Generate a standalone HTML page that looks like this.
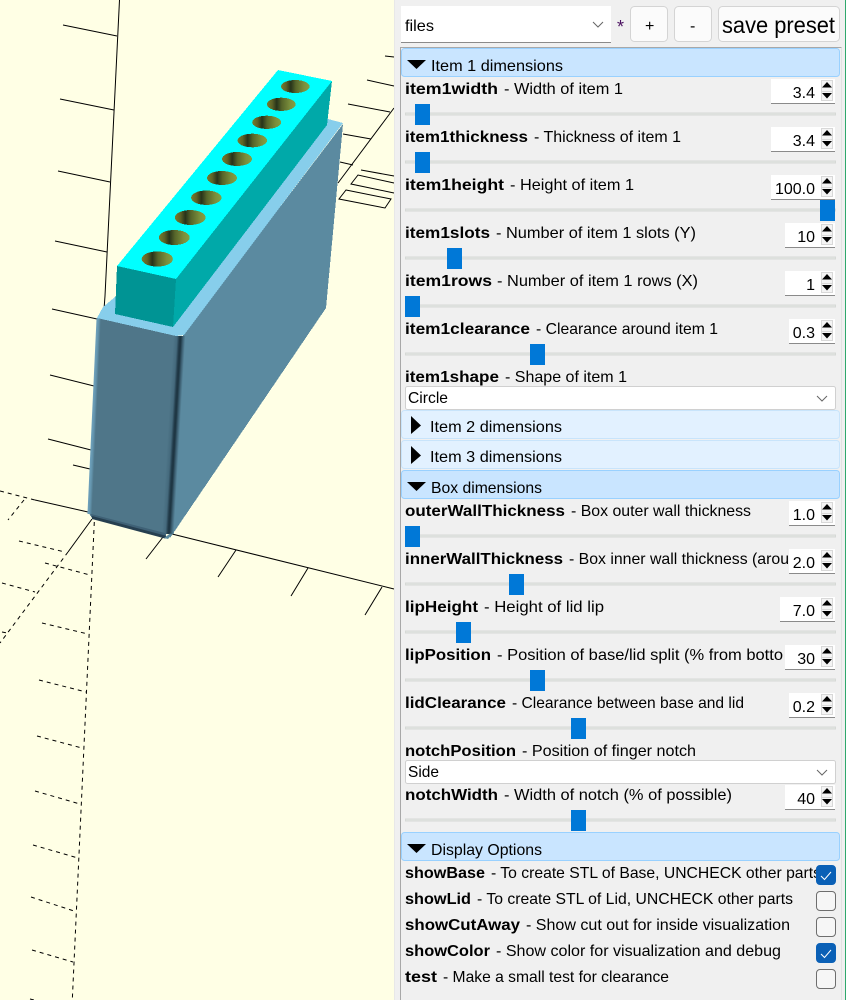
<!DOCTYPE html>
<html><head><meta charset="utf-8"><title>Customizer</title>
<style>
html,body{margin:0;padding:0;width:846px;height:1000px;overflow:hidden;background:#f0f0f0}
svg{display:block}
text{font-family:"Liberation Sans",sans-serif;font-size:16px;fill:#000}
.b{font-weight:bold}
.g line,.g polyline,.g polygon{stroke:#000;stroke-width:1;fill:none}
.d line{stroke-dasharray:4 4}
.c{shape-rendering:crispEdges}
.t{fill:#e4e6e4;stroke:#d6d9d6;stroke-width:1}
.h{fill:#0078d7}
.s{fill:#fff}
.hd{fill:#c9e5ff;stroke:#99d1ff;stroke-width:1}
.hl{fill:#e2f1ff;stroke:#c8e4fb;stroke-width:1}
.sel{fill:#fff;stroke:#d0d0d0;stroke-width:1}
.ch{fill:none;stroke:#666;stroke-width:1}
.btn{fill:#fbfbfb;stroke:#d4d4d4;stroke-width:1}
.cb{fill:#f6f6f6;stroke:#6e6e6e;stroke-width:1}
.cc{fill:#0a60b6;stroke:#0a60b6;stroke-width:1}
.ck{fill:none;stroke:#fff;stroke-width:1}
.sb{fill:#f4f4f4;stroke:#d8d8d8;stroke-width:1}
</style></head>
<body>
<svg width="846" height="1000" viewBox="0 0 846 1000" xmlns="http://www.w3.org/2000/svg">
<defs>
<linearGradient id="hole" x1="0" x2="1" y1="0" y2="0">
<stop offset="0" stop-color="#787c2c"/><stop offset=".18" stop-color="#5c6226"/><stop offset=".34" stop-color="#27331a"/><stop offset=".52" stop-color="#56652a"/><stop offset=".8" stop-color="#7a8e3c"/><stop offset="1" stop-color="#84a044"/>
</linearGradient>
<linearGradient id="edge" x1="0" x2="1" y1="0" y2="0">
<stop offset="0" stop-color="#4f7689"/><stop offset=".3" stop-color="#456a7d"/><stop offset=".5" stop-color="#213a48"/><stop offset=".62" stop-color="#1d3441"/><stop offset=".8" stop-color="#3d6073"/><stop offset="1" stop-color="#5b8aa0"/>
</linearGradient>
<linearGradient id="ledge" x1="0" x2="1" y1="0" y2="0">
<stop offset="0" stop-color="#6fa2bd"/><stop offset=".5" stop-color="#6495ae"/><stop offset="1" stop-color="#4f7689"/>
</linearGradient>
</defs>

<!-- viewport -->
<rect x="0" y="0" width="394" height="1000" fill="#ffffe5"/>

<!-- grid -->
<g class="g">
<polyline points="119.5,0 105,296 103.5,316"/>
<line x1="63" y1="25" x2="117" y2="36"/>
<line x1="60" y1="99" x2="114" y2="110"/>
<line x1="58" y1="171" x2="110" y2="182"/>
<line x1="55" y1="241" x2="107" y2="252"/>
<line x1="52" y1="309" x2="97" y2="319"/>
<line x1="50" y1="375" x2="94" y2="386"/>
<line x1="48" y1="439" x2="91" y2="450"/>
<line x1="73" y1="465" x2="90" y2="469"/>
<line x1="35" y1="500" x2="88" y2="512"/>
<line x1="172" y1="534" x2="394" y2="589"/>
<line x1="163" y1="537" x2="146" y2="559"/>
<line x1="236" y1="550" x2="218" y2="577"/>
<line x1="308" y1="568" x2="291" y2="596"/>
<line x1="382" y1="587" x2="365" y2="615"/>
<line x1="92" y1="519" x2="68" y2="552"/>
<line x1="385" y1="56" x2="394" y2="57"/>
<line x1="367" y1="80" x2="394" y2="86"/>
<line x1="348" y1="104" x2="390" y2="112"/>
<line x1="394" y1="108" x2="338" y2="183"/>
<line x1="343" y1="134" x2="371" y2="139"/>
<line x1="340" y1="162" x2="353" y2="165"/>
<line x1="361" y1="170" x2="394" y2="176"/>
<polyline points="394,183 358,175 351,184 394,193"/>
<polygon points="346,190 391,199 385,208 339,199"/>
</g>
<g class="g d">
<line x1="0" y1="491" x2="35" y2="500"/>
<line x1="24" y1="500" x2="8" y2="520"/>
<line x1="94.3" y1="522" x2="72.3" y2="1000"/>
<line x1="68" y1="552" x2="0" y2="643"/>
<line x1="19" y1="541" x2="65" y2="552"/>
<line x1="45" y1="563" x2="90" y2="575"/>
<line x1="2" y1="583" x2="35" y2="592"/>
<line x1="2" y1="632" x2="7" y2="633"/>
<line x1="42" y1="623" x2="88" y2="634"/>
<line x1="39" y1="680" x2="86" y2="692"/>
<line x1="37" y1="736" x2="82" y2="748"/>
<line x1="35" y1="791" x2="80" y2="804"/>
<line x1="33" y1="845" x2="78" y2="858"/>
<line x1="31" y1="897" x2="74" y2="911"/>
<line x1="32" y1="950" x2="73" y2="962"/>
<line x1="30" y1="999" x2="34" y2="1000"/>
</g>

<!-- box -->
<polygon class="c" points="183,335 343,124 326,308 170,538" fill="#5b8aa0"/>
<polygon class="c" points="97,318 176,336 166,538 92,518 88,512" fill="#4f7689"/>
<!-- left lit edge -->
<rect x="111.3" y="318" width="4.5" height="196" fill="url(#ledge)" transform="matrix(1,0,-0.0464,1,0,0)"/>
<!-- dark corner edge -->
<rect x="193.3" y="336" width="12" height="198" fill="url(#edge)" transform="matrix(1,0,-0.059,1,0,0)"/>
<!-- bottom rounded edge -->
<polygon points="91,514 165,533 166,536 92,518" fill="#3f6176"/>
<polygon points="92,516 165,535.5 168,538 165,538.5 92,519" fill="#263f50"/>
<polygon points="164,538 170,533.5 172,534.5 168,539" fill="#5b8aa0"/>
<polygon class="c" points="97,318 103,307 328,119 343,123 184,335 176,336" fill="#87ceeb"/>

<!-- item -->
<polygon class="c" points="117,266 176,279 173,327 115,314" fill="#009494"/>
<polygon class="c" points="176,279 332,81 327,125 173,327" fill="#00a9a9"/>
<polygon class="c" points="278,70 332,81 176,279 117,266" fill="#00ffff"/>
<g class="c" fill="url(#hole)">
<ellipse cx="295.3" cy="86.5" rx="14.3" ry="6.5"/>
<ellipse cx="281.3" cy="104.3" rx="14.4" ry="6.6"/>
<ellipse cx="266.7" cy="122.3" rx="14.5" ry="6.6"/>
<ellipse cx="252.3" cy="140.5" rx="14.8" ry="6.8"/>
<ellipse cx="237" cy="159" rx="15" ry="7"/>
<ellipse cx="222" cy="178" rx="15" ry="7"/>
<ellipse cx="206.3" cy="197.7" rx="15.2" ry="7.2"/>
<ellipse cx="190.3" cy="217.5" rx="15.4" ry="7.4"/>
<ellipse cx="174.3" cy="237.5" rx="15.5" ry="7.5"/>
<ellipse cx="157.3" cy="259" rx="15.6" ry="7.6"/>
</g>

<!-- panel -->
<rect x="394" y="0" width="451" height="1000" fill="#f0f0f0"/>
<rect x="394" y="0" width="1" height="1000" fill="#e8e8e8"/>
<rect x="845" y="0" width="1" height="1000" fill="#2fa86c"/>
<polyline points="400.5,1000 400.5,47.5 841.5,47.5" fill="none" stroke="#a8a8a8" stroke-width="1" class="c"/>
<rect x="841" y="48" width="1" height="952" fill="#e2e2e2"/>

<!-- top bar -->
<rect x="401" y="6" width="210" height="37" fill="#fff"/>
<rect x="401" y="42" width="210" height="1" fill="#8a8a8a"/>
<text x="405" y="31" textLength="29" lengthAdjust="spacingAndGlyphs">files</text>
<polyline class="ch" points="593,22 598,27 603,22"/>
<text x="617" y="33" style="fill:#4a1060;font-size:18px">*</text>
<rect class="btn" x="630.5" y="6.5" width="37" height="35" rx="4"/>
<rect class="btn" x="674.5" y="6.5" width="37" height="35" rx="4"/>
<rect class="btn" x="718.5" y="6.5" width="121" height="35" rx="4"/>
<text x="645" y="31" style="font-size:16px">+</text>
<text x="690" y="31" style="font-size:16px">-</text>
<text x="722" y="33" style="font-size:23px" textLength="113" lengthAdjust="spacingAndGlyphs">save preset</text>

<!-- headers -->
<rect class="hd" x="401.5" y="48.5" width="438" height="28" rx="3"/>
<polygon points="407,60 426,60 416.5,69"/>
<text x="431" y="71" textLength="132" lengthAdjust="spacingAndGlyphs">Item 1 dimensions</text>

<rect class="hl" x="401.5" y="410.5" width="438" height="28" rx="3"/>
<polygon points="411,416 421,425.5 411,434"/>
<text x="430" y="432" textLength="132" lengthAdjust="spacingAndGlyphs">Item 2 dimensions</text>

<rect class="hl" x="401.5" y="440.5" width="438" height="28" rx="3"/>
<polygon points="411,446 421,455.5 411,464"/>
<text x="430" y="462" textLength="132" lengthAdjust="spacingAndGlyphs">Item 3 dimensions</text>

<rect class="hd" x="401.5" y="470.5" width="438" height="28" rx="3"/>
<polygon points="407,482 426,482 416.5,491"/>
<text x="431" y="493" textLength="111" lengthAdjust="spacingAndGlyphs">Box dimensions</text>

<rect class="hd" x="401.5" y="832.5" width="438" height="28" rx="3"/>
<polygon points="407,844 426,844 416.5,853"/>
<text x="431" y="855" textLength="111" lengthAdjust="spacingAndGlyphs">Display Options</text>

<!-- labels -->
<text class="b" x="405" y="94" textLength="93" lengthAdjust="spacingAndGlyphs">item1width</text>
<text x="504" y="94" textLength="119" lengthAdjust="spacingAndGlyphs">- Width of item 1</text>
<text class="b" x="405" y="142" textLength="123" lengthAdjust="spacingAndGlyphs">item1thickness</text>
<text x="534" y="142" textLength="147" lengthAdjust="spacingAndGlyphs">- Thickness of item 1</text>
<text class="b" x="405" y="190" textLength="99" lengthAdjust="spacingAndGlyphs">item1height</text>
<text x="510" y="190" textLength="124" lengthAdjust="spacingAndGlyphs">- Height of item 1</text>
<text class="b" x="405" y="238" textLength="85" lengthAdjust="spacingAndGlyphs">item1slots</text>
<text x="496" y="238" textLength="200" lengthAdjust="spacingAndGlyphs">- Number of item 1 slots (Y)</text>
<text class="b" x="405" y="286" textLength="87" lengthAdjust="spacingAndGlyphs">item1rows</text>
<text x="497" y="286" textLength="201" lengthAdjust="spacingAndGlyphs">- Number of item 1 rows (X)</text>
<text class="b" x="405" y="334" textLength="125" lengthAdjust="spacingAndGlyphs">item1clearance</text>
<text x="536" y="334" textLength="182" lengthAdjust="spacingAndGlyphs">- Clearance around item 1</text>
<text class="b" x="405" y="382" textLength="94" lengthAdjust="spacingAndGlyphs">item1shape</text>
<text x="505" y="382" textLength="122" lengthAdjust="spacingAndGlyphs">- Shape of item 1</text>
<text class="b" x="405" y="516" textLength="160" lengthAdjust="spacingAndGlyphs">outerWallThickness</text>
<text x="571" y="516" textLength="180" lengthAdjust="spacingAndGlyphs">- Box outer wall thickness</text>
<text class="b" x="405" y="564" textLength="158" lengthAdjust="spacingAndGlyphs">innerWallThickness</text>
<text x="569" y="564" textLength="220" lengthAdjust="spacingAndGlyphs">- Box inner wall thickness (arou</text>
<text class="b" x="405" y="612" textLength="73" lengthAdjust="spacingAndGlyphs">lipHeight</text>
<text x="484" y="612" textLength="120" lengthAdjust="spacingAndGlyphs">- Height of lid lip</text>
<text class="b" x="405" y="660" textLength="86" lengthAdjust="spacingAndGlyphs">lipPosition</text>
<text x="497" y="660" textLength="286" lengthAdjust="spacingAndGlyphs">- Position of base/lid split (% from botto</text>
<text class="b" x="405" y="708" textLength="101" lengthAdjust="spacingAndGlyphs">lidClearance</text>
<text x="512" y="708" textLength="232" lengthAdjust="spacingAndGlyphs">- Clearance between base and lid</text>
<text class="b" x="405" y="756" textLength="111" lengthAdjust="spacingAndGlyphs">notchPosition</text>
<text x="522" y="756" textLength="174" lengthAdjust="spacingAndGlyphs">- Position of finger notch</text>
<text class="b" x="405" y="800" textLength="93" lengthAdjust="spacingAndGlyphs">notchWidth</text>
<text x="504" y="800" textLength="228" lengthAdjust="spacingAndGlyphs">- Width of notch (% of possible)</text>
<text class="b" x="405" y="878" textLength="80" lengthAdjust="spacingAndGlyphs">showBase</text>
<text x="491" y="878" textLength="330" lengthAdjust="spacingAndGlyphs">- To create STL of Base, UNCHECK other parts</text>
<text class="b" x="405" y="904" textLength="66" lengthAdjust="spacingAndGlyphs">showLid</text>
<text x="477" y="904" textLength="316" lengthAdjust="spacingAndGlyphs">- To create STL of Lid, UNCHECK other parts</text>
<text class="b" x="405" y="930" textLength="115" lengthAdjust="spacingAndGlyphs">showCutAway</text>
<text x="526" y="930" textLength="264" lengthAdjust="spacingAndGlyphs">- Show cut out for inside visualization</text>
<text class="b" x="405" y="956" textLength="85" lengthAdjust="spacingAndGlyphs">showColor</text>
<text x="496" y="956" textLength="285" lengthAdjust="spacingAndGlyphs">- Show color for visualization and debug</text>
<text class="b" x="405" y="982" textLength="32" lengthAdjust="spacingAndGlyphs">test</text>
<text x="443" y="982" textLength="226" lengthAdjust="spacingAndGlyphs">- Make a small test for clearance</text>

<!-- selects -->
<rect class="sel" x="405.5" y="386.5" width="430" height="23" rx="2"/>
<text x="408" y="403" textLength="40" lengthAdjust="spacingAndGlyphs">Circle</text>
<polyline class="ch" points="817,396 822,401 827,396"/>
<rect class="sel" x="405.5" y="760.5" width="430" height="23" rx="2"/>
<text x="408" y="777" textLength="31" lengthAdjust="spacingAndGlyphs">Side</text>
<polyline class="ch" points="817,770 822,775 827,770"/>

<!-- sliders -->
<g class="c">
<rect class="t" x="405.5" y="113" width="430" height="2"/><rect class="h" x="415" y="104" width="15" height="21"/>
<rect class="t" x="405.5" y="161" width="430" height="2"/><rect class="h" x="415" y="152" width="15" height="21"/>
<rect class="t" x="405.5" y="209" width="430" height="2"/><rect class="h" x="820" y="200" width="15" height="21"/>
<rect class="t" x="405.5" y="257" width="430" height="2"/><rect class="h" x="447" y="248" width="15" height="21"/>
<rect class="t" x="405.5" y="305" width="430" height="2"/><rect class="h" x="405" y="296" width="15" height="21"/>
<rect class="t" x="405.5" y="353" width="430" height="2"/><rect class="h" x="530" y="344" width="15" height="21"/>
<rect class="t" x="405.5" y="535" width="430" height="2"/><rect class="h" x="405" y="526" width="15" height="21"/>
<rect class="t" x="405.5" y="583" width="430" height="2"/><rect class="h" x="509" y="574" width="15" height="21"/>
<rect class="t" x="405.5" y="631" width="430" height="2"/><rect class="h" x="456" y="622" width="15" height="21"/>
<rect class="t" x="405.5" y="679" width="430" height="2"/><rect class="h" x="530" y="670" width="15" height="21"/>
<rect class="t" x="405.5" y="727" width="430" height="2"/><rect class="h" x="571" y="718" width="15" height="21"/>
<rect class="t" x="405.5" y="819" width="430" height="2"/><rect class="h" x="571" y="810" width="15" height="21"/>
</g>

<!-- spin boxes -->
<g class="c">
<rect class="s" x="771" y="79" width="64" height="24"/><rect x="771" y="103" width="64" height="1" fill="#8a8a8a"/>
<rect class="s" x="771" y="127" width="64" height="24"/><rect x="771" y="151" width="64" height="1" fill="#8a8a8a"/>
<rect class="s" x="771" y="175" width="64" height="24"/><rect x="771" y="199" width="64" height="1" fill="#8a8a8a"/>
<rect class="s" x="785" y="223" width="50" height="24"/><rect x="785" y="247" width="50" height="1" fill="#8a8a8a"/>
<rect class="s" x="785" y="271" width="50" height="24"/><rect x="785" y="295" width="50" height="1" fill="#8a8a8a"/>
<rect class="s" x="789" y="319" width="46" height="24"/><rect x="789" y="343" width="46" height="1" fill="#8a8a8a"/>
<rect class="s" x="789" y="501" width="46" height="24"/><rect x="789" y="525" width="46" height="1" fill="#8a8a8a"/>
<rect class="s" x="789" y="549" width="46" height="24"/><rect x="789" y="573" width="46" height="1" fill="#8a8a8a"/>
<rect class="s" x="780" y="597" width="55" height="24"/><rect x="780" y="621" width="55" height="1" fill="#8a8a8a"/>
<rect class="s" x="785" y="645" width="50" height="24"/><rect x="785" y="669" width="50" height="1" fill="#8a8a8a"/>
<rect class="s" x="789" y="693" width="46" height="24"/><rect x="789" y="717" width="46" height="1" fill="#8a8a8a"/>
<rect class="s" x="785" y="785" width="50" height="24"/><rect x="785" y="809" width="50" height="1" fill="#8a8a8a"/>
</g>
<g text-anchor="end">
<text x="815" y="98">3.4</text>
<text x="815" y="146">3.4</text>
<text x="815" y="194">100.0</text>
<text x="815" y="242">10</text>
<text x="815" y="290">1</text>
<text x="815" y="338">0.3</text>
<text x="815" y="520">1.0</text>
<text x="815" y="568">2.0</text>
<text x="815" y="616">7.0</text>
<text x="815" y="664">30</text>
<text x="815" y="712">0.2</text>
<text x="815" y="804">40</text>
</g>
<!-- spin button backgrounds -->
<g class="c">
<rect class="sb" x="821.5" y="80.5" width="11" height="11"/><rect class="sb" x="821.5" y="91.5" width="11" height="9"/>
<rect class="sb" x="821.5" y="128.5" width="11" height="11"/><rect class="sb" x="821.5" y="139.5" width="11" height="9"/>
<rect class="sb" x="821.5" y="176.5" width="11" height="11"/><rect class="sb" x="821.5" y="187.5" width="11" height="9"/>
<rect class="sb" x="821.5" y="224.5" width="11" height="11"/><rect class="sb" x="821.5" y="235.5" width="11" height="9"/>
<rect class="sb" x="821.5" y="272.5" width="11" height="11"/><rect class="sb" x="821.5" y="283.5" width="11" height="9"/>
<rect class="sb" x="821.5" y="320.5" width="11" height="11"/><rect class="sb" x="821.5" y="331.5" width="11" height="9"/>
<rect class="sb" x="821.5" y="502.5" width="11" height="11"/><rect class="sb" x="821.5" y="513.5" width="11" height="9"/>
<rect class="sb" x="821.5" y="550.5" width="11" height="11"/><rect class="sb" x="821.5" y="561.5" width="11" height="9"/>
<rect class="sb" x="821.5" y="598.5" width="11" height="11"/><rect class="sb" x="821.5" y="609.5" width="11" height="9"/>
<rect class="sb" x="821.5" y="646.5" width="11" height="11"/><rect class="sb" x="821.5" y="657.5" width="11" height="9"/>
<rect class="sb" x="821.5" y="694.5" width="11" height="11"/><rect class="sb" x="821.5" y="705.5" width="11" height="9"/>
<rect class="sb" x="821.5" y="786.5" width="11" height="11"/><rect class="sb" x="821.5" y="797.5" width="11" height="9"/>
</g>
<!-- spin arrows -->
<g fill="#000" stroke="none">
<path d="M827 82l5 5.5h-10zM822 93h10l-5 5.5z"/>
<path d="M827 130l5 5.5h-10zM822 141h10l-5 5.5z"/>
<path d="M827 178l5 5.5h-10zM822 189h10l-5 5.5z"/>
<path d="M827 226l5 5.5h-10zM822 237h10l-5 5.5z"/>
<path d="M827 274l5 5.5h-10zM822 285h10l-5 5.5z"/>
<path d="M827 322l5 5.5h-10zM822 333h10l-5 5.5z"/>
<path d="M827 504l5 5.5h-10zM822 515h10l-5 5.5z"/>
<path d="M827 552l5 5.5h-10zM822 563h10l-5 5.5z"/>
<path d="M827 600l5 5.5h-10zM822 611h10l-5 5.5z"/>
<path d="M827 648l5 5.5h-10zM822 659h10l-5 5.5z"/>
<path d="M827 696l5 5.5h-10zM822 707h10l-5 5.5z"/>
<path d="M827 788l5 5.5h-10zM822 799h10l-5 5.5z"/>
</g>

<!-- checkboxes -->
<rect class="cc" x="816.5" y="865.5" width="19" height="19" rx="3.5"/>
<polyline class="ck" points="821,876 824.5,879.5 831,872"/>
<rect class="cb" x="816.5" y="891.5" width="19" height="19" rx="3.5"/>
<rect class="cb" x="816.5" y="917.5" width="19" height="19" rx="3.5"/>
<rect class="cc" x="816.5" y="943.5" width="19" height="19" rx="3.5"/>
<polyline class="ck" points="821,954 824.5,957.5 831,950"/>
<rect class="cb" x="816.5" y="969.5" width="19" height="19" rx="3.5"/>
</svg>
</body></html>
